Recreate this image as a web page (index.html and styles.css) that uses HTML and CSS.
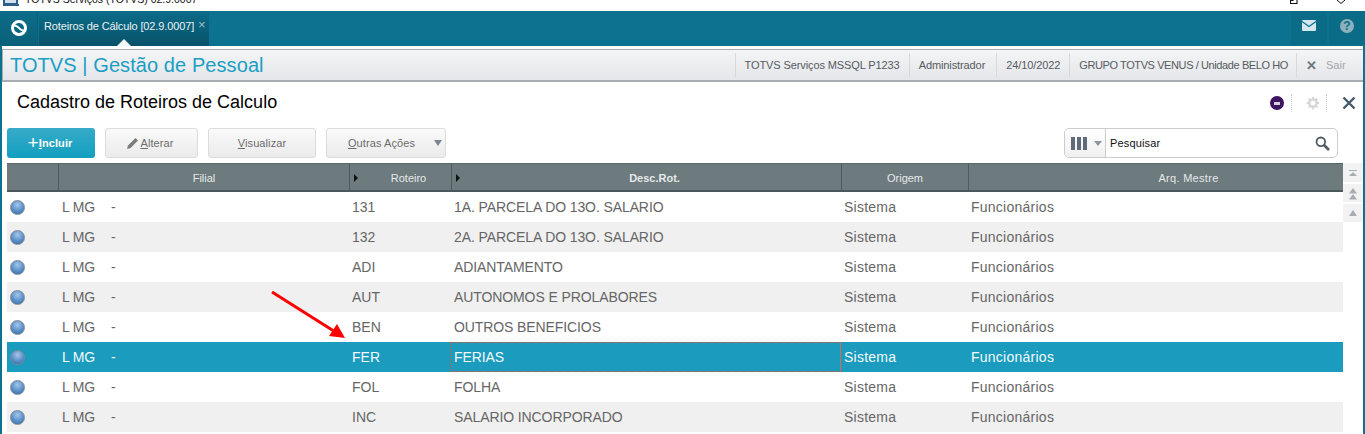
FILE: index.html
```html
<!DOCTYPE html>
<html lang="pt-BR">
<head>
<meta charset="utf-8">
<title>TOTVS Serviços</title>
<link rel="stylesheet" href="styles.css">
</head>
<body>
<div class="titlebar">
  <svg class="win-icon" width="16" height="6" viewBox="0 0 16 6"><rect x="1" y="-6" width="13" height="10" fill="#cfe0ee" stroke="#2d5f8a" stroke-width="2"/><rect x="0" y="4" width="16" height="2" fill="#2d5f8a"/></svg>
  <span class="win-title">TOTVS Serviços (TOTVS) 02.9.0007</span>
  <span class="win-controls">
    <svg width="10" height="5" viewBox="0 0 10 5"><path d="M3 0V0.500H0.500V3.500H7V0" fill="none" stroke="#111" stroke-width="1.100"/></svg>
    <svg width="10" height="5" viewBox="0 0 10 5"><path d="M1 0L5 3.500L9 0" fill="none" stroke="#111" stroke-width="1"/></svg>
  </span>
</div>
<div class="app">
  <nav class="topbar">
    <div class="logo-tab">
      <svg width="18" height="18" viewBox="0 0 18 18"><circle cx="9" cy="9" r="6.500" fill="none" stroke="#fff" stroke-width="3"/><path d="M3.500 6.500C6.500 6 8 8 9 9C10 10 11.500 12 14.500 11.500" fill="none" stroke="#fff" stroke-width="2"/></svg>
    </div>
    <div class="active-tab">
      <span class="tab-label">Roteiros de Cálculo [02.9.0007]</span><span class="tab-x">×</span>
      <i class="tab-caret"></i>
    </div>
    <div class="topbar-right">
      <div class="top-btn">
        <svg width="14" height="11" viewBox="0 0 14 11"><rect width="14" height="11" rx="1" fill="#d5e6ec"/><path d="M0 1.500L7 6.500L14 1.500" fill="none" stroke="#0c7290" stroke-width="1.300"/></svg>
      </div>
      <div class="top-btn">
        <span class="help">?</span>
      </div>
    </div>
  </nav>
  <header class="module-bar">
    <div class="module-name">TOTVS | Gestão de Pessoal</div>
    <div class="module-info">
      <span class="info-item">TOTVS Serviços MSSQL P1233</span>
      <span class="info-item info-user">Administrador</span>
      <span class="info-item">24/10/2022</span>
      <span class="info-item info-company">GRUPO TOTVS VENUS / Unidade BELO HO</span>
      <span class="info-exit"><b>✕</b>Sair</span>
    </div>
  </header>
  <section class="page-head">
    <h1>Cadastro de Roteiros de Calculo</h1>
    <div class="page-tools">
      <span class="status-dot"><i></i></span>
      <span class="tool-cell">
        <svg width="14" height="14" viewBox="0 0 16 16"><circle cx="8" cy="8" r="4.200" fill="none" stroke="#d4d4d4" stroke-width="2.600"/><path d="M8 1V3M8 13V15M1 8H3M13 8H15M3 3L4.500 4.500M11.500 11.500L13 13M13 3L11.500 4.500M4.500 11.500L3 13" stroke="#d4d4d4" stroke-width="2.200"/></svg>
      </span>
      <svg class="close-icon" width="14" height="14" viewBox="0 0 14 14"><path d="M1.500 1.500L12.500 12.500M12.500 1.500L1.500 12.500" stroke="#47586b" stroke-width="2.400"/></svg>
    </div>
  </section>
  <section class="toolbar">
    <button class="btn primary"><span class="plus">+</span><span><u>I</u>ncluir</span></button>
    <button class="btn alterar">
      <svg width="13" height="13" viewBox="0 0 13 13"><path d="M1 12L2 8.500L9.500 1L12 3.500L4.500 11Z" fill="#7b7b7b"/></svg><span><u>A</u>lterar</span>
    </button>
    <button class="btn visualizar"><span><u>V</u>isualizar</span></button>
    <button class="btn outras"><span><u>O</u>utras Ações</span><i class="btn-caret"></i></button>
    <div class="search">
      <div class="search-kind"><span class="bars"><i></i><i></i><i></i></span><i class="kind-caret"></i></div>
      <div class="search-text">Pesquisar</div>
      <svg width="15" height="15" viewBox="0 0 15 15"><circle cx="5.800" cy="5.800" r="4.300" fill="none" stroke="#4f5b66" stroke-width="1.800"/><path d="M9 9L14 14" stroke="#4f5b66" stroke-width="2.600"/></svg>
    </div>
  </section>
  <section class="browse">
    <div class="grid">
      <div class="row head">
        <div class="cell"></div>
        <div class="cell center">Filial</div>
        <div class="cell center sorted">Roteiro</div>
        <div class="cell center sorted strong">Desc.Rot.</div>
        <div class="cell center">Origem</div>
        <div class="cell center arq">Arq. Mestre</div>
      </div>
      <div class="row"><div class="cell"><i class="ball"></i></div><div class="cell filial"><span>L MG</span><span>-</span></div><div class="cell code">131</div><div class="cell desc">1A. PARCELA DO 13O. SALARIO</div><div class="cell">Sistema</div><div class="cell">Funcionários</div></div>
      <div class="row alt"><div class="cell"><i class="ball"></i></div><div class="cell filial"><span>L MG</span><span>-</span></div><div class="cell code">132</div><div class="cell desc">2A. PARCELA DO 13O. SALARIO</div><div class="cell">Sistema</div><div class="cell">Funcionários</div></div>
      <div class="row"><div class="cell"><i class="ball"></i></div><div class="cell filial"><span>L MG</span><span>-</span></div><div class="cell code">ADI</div><div class="cell desc">ADIANTAMENTO</div><div class="cell">Sistema</div><div class="cell">Funcionários</div></div>
      <div class="row alt"><div class="cell"><i class="ball"></i></div><div class="cell filial"><span>L MG</span><span>-</span></div><div class="cell code">AUT</div><div class="cell desc">AUTONOMOS E PROLABORES</div><div class="cell">Sistema</div><div class="cell">Funcionários</div></div>
      <div class="row"><div class="cell"><i class="ball"></i></div><div class="cell filial"><span>L MG</span><span>-</span></div><div class="cell code">BEN</div><div class="cell desc">OUTROS BENEFICIOS</div><div class="cell">Sistema</div><div class="cell">Funcionários</div></div>
      <div class="row selected"><div class="cell"><i class="ball"></i></div><div class="cell filial"><span>L MG</span><span>-</span></div><div class="cell code">FER</div><div class="cell desc focus">FERIAS</div><div class="cell">Sistema</div><div class="cell">Funcionários</div></div>
      <div class="row"><div class="cell"><i class="ball"></i></div><div class="cell filial"><span>L MG</span><span>-</span></div><div class="cell code">FOL</div><div class="cell desc">FOLHA</div><div class="cell">Sistema</div><div class="cell">Funcionários</div></div>
      <div class="row alt"><div class="cell"><i class="ball"></i></div><div class="cell filial"><span>L MG</span><span>-</span></div><div class="cell code">INC</div><div class="cell desc">SALARIO INCORPORADO</div><div class="cell">Sistema</div><div class="cell">Funcionários</div></div>
    </div>
    <aside class="scroll">
      <div class="scroll-btn"><svg width="8" height="6" viewBox="0 0 8 6"><path d="M0 0H8V1H0ZM4 2L8 6H0Z" fill="#a8adb1"/></svg></div>
      <div class="scroll-btn"><svg width="8" height="12" viewBox="0 0 8 12"><path d="M4 0L8 5.500H0ZM4 6L8 11.500H0Z" fill="#a8adb1"/></svg></div>
      <div class="scroll-btn"><svg width="8" height="6" viewBox="0 0 8 6"><path d="M4 0L8 6H0Z" fill="#a8adb1"/></svg></div>
    </aside>
  </section>
  <svg class="arrow" width="80" height="54" viewBox="0 0 80 54"><path d="M1 1L62 39.500" stroke="#f00" stroke-width="3"/><path d="M74 47L58 45L66 33Z" fill="#f00"/></svg>
</div>
</body>
</html>
```
FILE: styles.css
```css
* { box-sizing: border-box; }
html, body { margin: 0; padding: 0; height: 100%; overflow: hidden; background: #fff; }
body { font-family: "Liberation Sans", Arial, sans-serif; display: flex; flex-direction: column; }

.titlebar { height: 11px; flex: none; display: flex; align-items: flex-start; overflow: hidden; padding-left: 3px; background: #fff; }
.win-icon { flex: none; }
.win-title { font-size: 10.500px; line-height: 12px; margin-left: 6px; margin-top: -7px; color: #111; height: 12px; flex: none; }
.win-controls { margin-left: auto; display: flex; gap: 36px; padding-right: 19px; }

.app { position: relative; flex: 1; background: #fff; border-left: 2px solid #0c7290; border-right: 2px solid #0c7290; }

.topbar { height: 35px; margin: 0 -2px; background: #0c7290; display: flex; align-items: stretch; }
.logo-tab { width: 38px; background: linear-gradient(#0c6d89, #0a6079); display: flex; align-items: center; justify-content: center; border-right: 1px solid #0a6079; padding-bottom: 2px; }
.active-tab { position: relative; margin-left: 1px; width: 170px; background: linear-gradient(#0b6c88, #09526a); color: #e9f3f6; font-size: 11px; display: flex; align-items: center; padding: 0 0 5px 5px; white-space: nowrap; }
.tab-label { letter-spacing: -0.130px; }
.tab-x { margin-left: 4px; margin-top: -3px; color: #9fc0cb; font-size: 13px; }
.tab-caret { position: absolute; left: 78px; bottom: 0; width: 0; height: 0; border-left: 7px solid transparent; border-right: 7px solid transparent; border-bottom: 7px solid #f3f5f6; }
.topbar-right { margin-left: auto; display: flex; gap: 2px; }
.top-btn { width: 36px; height: 34px; background: #0b6c88; display: flex; align-items: center; justify-content: center; padding-bottom: 5px; }
.help { width: 14px; height: 14px; border-radius: 50%; background: #8eb0bc; color: #0c6d89; font-size: 12px; font-weight: bold; line-height: 14px; text-align: center; }

.module-bar { height: 33px; margin-top: 3px; border: 1px solid #a9adb1; border-width: 1px 0 2px 1px; background: linear-gradient(#f4f5f6, #e4e6e9); display: flex; align-items: center; justify-content: space-between; }
.module-name { font-size: 20px; color: #1a9ec6; padding-left: 7px; letter-spacing: 0.080px; white-space: nowrap; }
.module-info { display: flex; align-items: stretch; font-size: 11px; height: 24px; color: #555b60; white-space: nowrap; }
.info-item { display: flex; align-items: center; padding: 0 9px; border-left: 1px solid #d6d8db; letter-spacing: -0.100px; }
.info-user { padding-right: 11px; }
.info-company { letter-spacing: -0.400px; padding-right: 8px; }
.info-exit { display: flex; align-items: center; gap: 9px; width: 67px; padding-left: 9px; color: #a3a8ad; border-left: 1px solid #d6d8db; }
.info-exit b { font-size: 13px; color: #6d7680; }

.page-head { height: 42px; display: flex; align-items: center; justify-content: space-between; padding: 0 0 2px 15px; }
.page-head h1 { margin: 0; font-size: 18px; font-weight: normal; color: #000; }
.page-tools { display: flex; align-items: center; padding-right: 7px; margin-top: 2px; }
.status-dot { width: 14px; height: 14px; border-radius: 50%; background: #3d1560; display: flex; align-items: center; justify-content: center; }
.status-dot i { width: 6px; height: 3px; background: #fff; opacity: .8; }
.tool-cell { display: flex; align-items: center; justify-content: center; width: 36px; height: 18px; margin-left: 7px; margin-right: 15px; padding-left: 8px; border-left: 1px dotted #c8c8c8; border-right: 1px dotted #c8c8c8; }
.close-icon { display: block; }

.toolbar { height: 39px; display: flex; align-items: flex-start; padding: 4px 5px 0 5px; }
.btn { height: 30px; border-radius: 3px; border: 1px solid #dcdcdc; background: linear-gradient(#fafafa, #ebebeb); color: #6d6d6d; font: 11px "Liberation Sans", Arial, sans-serif; display: flex; align-items: center; justify-content: center; padding: 0; letter-spacing: 0.1px; }
.btn.primary { width: 88px; border: 0; background: linear-gradient(#37abc9, #129fbf); color: #fff; font-weight: bold; padding-right: 2px; }
.plus { font-size: 19px; font-weight: normal; line-height: 16px; }
.alterar { width: 93px; margin-left: 10px; gap: 1px; padding-right: 3px; }
.visualizar { width: 108px; margin-left: 10px; }
.outras { width: 120px; margin-left: 10px; position: relative; padding-right: 9px; }
.btn-caret { position: absolute; right: 3px; top: 11px; border-left: 4px solid transparent; border-right: 4px solid transparent; border-top: 6px solid #7a8793; }
.search { margin-left: auto; width: 274px; height: 30px; margin-right: 20px; border: 1px solid #ccc; border-radius: 5px; display: flex; align-items: center; padding-right: 7px; }
.search-kind { width: 41px; height: 100%; border-right: 1px solid #ccc; display: flex; align-items: center; gap: 7px; padding-left: 6px; background: linear-gradient(#fff, #f0f0f0); border-radius: 5px 0 0 5px; }
.bars { display: flex; gap: 2px; }
.bars i { width: 4px; height: 13px; background: #5f6b78; }
.kind-caret { border-left: 4px solid transparent; border-right: 4px solid transparent; border-top: 5px solid #8b96a1; }
.search-text { flex: 1; font-size: 11px; color: #111; padding-left: 4px; letter-spacing: 0.15px; }

.browse { display: flex; padding-left: 5px; }
.grid { width: 1336px; }
.row { display: grid; grid-template-columns: 51px 291px 102px 390px 127px 375px; height: 30px; font-size: 14px; color: #666; background: #fff; }
.row.alt { background: #f0f0f0; }
.row.selected { background: #1b9bbd; color: #f2fafc; }
.row.head { height: 29px; background: #6d7a7e; color: #e6e9ea; font-size: 11px; border-top: 1px solid #5b6669; border-bottom: 2px solid #4d585b; }
.cell { display: flex; align-items: center; padding-left: 3px; letter-spacing: 0.25px; white-space: nowrap; position: relative; }
.cell.code { letter-spacing: 0; }
.cell.desc { letter-spacing: -0.100px; }
.head .cell { padding: 1px 0 0; border-left: 1px solid #4f5b5e; letter-spacing: 0; }
.head .cell:first-child { border-left: 0; }
.center { justify-content: center; }
.head .sorted { padding-left: 16px; }
.head .arq { padding-left: 65px; letter-spacing: 0.3px; }
.sorted::before { content: ""; position: absolute; left: 4px; top: 10px; border-top: 4px solid transparent; border-bottom: 4px solid transparent; border-left: 4px solid #111; }
.strong { font-weight: bold; }
.focus { border: 1px dotted #e8502a; border-right: 1px solid #d96a4a; padding-left: 2px; }
.filial { gap: 17px; padding-left: 4px; }
.filial span:first-child { width: 32px; letter-spacing: -0.2px; }
.ball { width: 15px; height: 15px; border-radius: 50%; background: radial-gradient(circle at 50% 30%, #a5c6ea, #5a8fc8 55%, #2f65a0); border: 1px solid #7d8b99; }

.scroll { width: 20px; display: flex; flex-direction: column; align-self: flex-start; }
.scroll-btn { height: 21px; display: flex; align-items: center; justify-content: center; border-bottom: 2px solid #fff; background: #f2f2f2; }
.scroll-btn:nth-child(2) { height: 20px; padding-top: 2px; }
.scroll-btn:nth-child(3) { height: 18px; border-bottom: 0; }

.arrow { position: absolute; left: 269px; top: 280px; }
```
